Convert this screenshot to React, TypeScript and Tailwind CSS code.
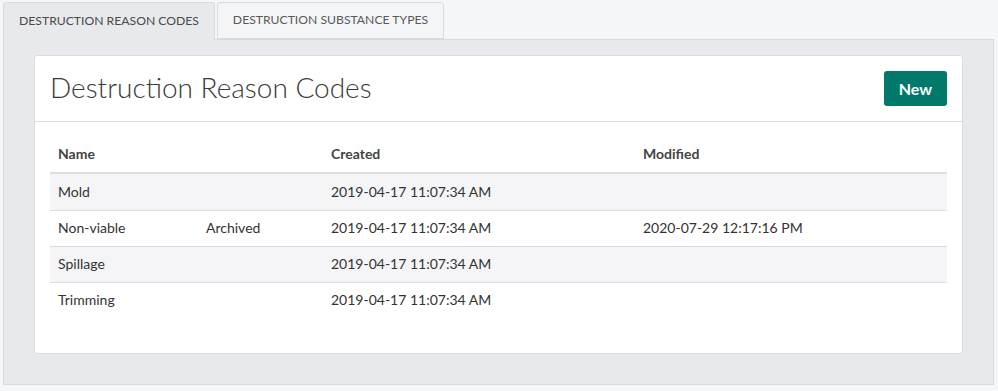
import React from "react";

const rows = [
  { name: "Mold", status: "", created: "2019-04-17 11:07:34 AM", modified: "" },
  { name: "Non-viable", status: "Archived", created: "2019-04-17 11:07:34 AM", modified: "2020-07-29 12:17:16 PM" },
  { name: "Spillage", status: "", created: "2019-04-17 11:07:34 AM", modified: "" },
  { name: "Trimming", status: "", created: "2019-04-17 11:07:34 AM", modified: "" },
];

export default function App() {
  return (
    <div
      className="h-[391px] w-[998px] bg-[#f5f6f8] pt-[2px] pl-[3px] pr-[4px]"
      style={{ fontFamily: "Lato, 'Open Sans', sans-serif" }}
    >
      <div className="flex gap-[2px] relative z-10 -mb-px">
        <div className="w-[212px] h-[38px] flex items-center justify-center rounded-t-[3px] border border-b-0 border-[#d9dadd] bg-[#e8e9ec] text-[12.2px] text-[#4a4a4a]">
          DESTRUCTION REASON CODES
        </div>
        <div className="w-[227px] h-[37px] flex items-center justify-center rounded-t-[3px] border border-[#d9dadd] bg-[#f4f5f7] text-[12.2px] text-[#5a5a5a]">
          DESTRUCTION SUBSTANCE TYPES
        </div>
      </div>
      <div className="h-[346px] border border-[#d9dadd] bg-[#e8e9ec] pt-[15px] pl-[30px] pr-[30px] pb-[30px]">
        <div className="h-[299px] rounded-[3px] border border-[#dcdde0] bg-white">
          <div className="flex items-center justify-between border-b border-[#dcdde0] pl-[15px] pr-[15px] pt-[15px] pb-[15px]">
            <h1 className="mb-[3px] text-[28px] font-light text-[#3a3a3a] leading-[32px]">Destruction Reason Codes</h1>
            <button className="h-[35px] rounded-[3px] bg-[#00796b] px-[15px] text-[16px] font-bold text-white">
              New
            </button>
          </div>
          <div className="px-[15px] pt-[13px] text-[14px] text-[#333]">
            <div className="grid grid-cols-[148px_125px_312px_1fr] h-[39px] items-center border-b-2 border-[#dcdde0] font-bold text-[#444]">
              <div className="pl-[8px]">Name</div>
              <div className="pl-[8px]"></div>
              <div className="pl-[8px]">Created</div>
              <div className="pl-[8px]">Modified</div>
            </div>
            {rows.map((r, i) => (
              <div
                key={r.name}
                className={`grid grid-cols-[148px_125px_312px_1fr] h-[36px] items-center pb-[2px] ${i > 0 ? "border-t border-[#dcdde0]" : ""} ${i % 2 === 0 ? "bg-[#f5f5f7]" : "bg-white"}`}
              >
                <div className="pl-[8px]">{r.name}</div>
                <div className="pl-[8px]">{r.status}</div>
                <div className="pl-[8px]">{r.created}</div>
                <div className="pl-[8px]">{r.modified}</div>
              </div>
            ))}
          </div>
        </div>
      </div>
    </div>
  );
}
